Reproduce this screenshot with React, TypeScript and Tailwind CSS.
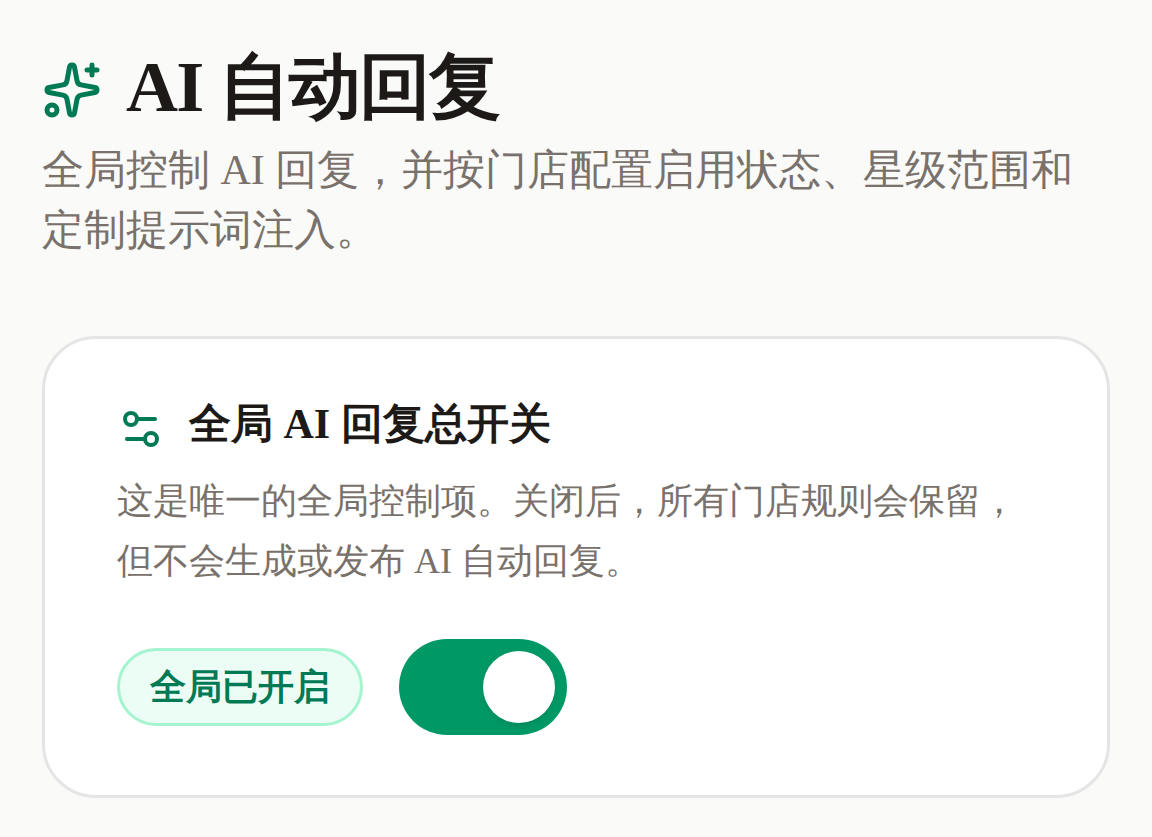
import { useState } from "react";
import { Settings2, Sparkles } from "lucide-react";

export default function App() {
  const [enabled, setEnabled] = useState(true);

  return (
    <div className="min-h-screen bg-[#fafaf9] px-[42px] pt-[42px] pb-10 font-['Liberation_Serif',serif] text-stone-900">
      <header>
        <h1 className="flex items-center gap-6 text-[72px] leading-[90px] font-bold tracking-[-1.8px]">
          <Sparkles className="mt-1.5 size-[60px] shrink-0 text-[#007a55]" aria-hidden="true" />
          AI 自动回复
        </h1>
        <p className="mt-2 text-[42px] leading-[60px] text-stone-500">
          全局控制 AI 回复，并按门店配置启用状态、星级范围和定制提示词注入。
        </p>
      </header>

      <main className="mt-[76px]">
        <section className="rounded-[54px] border-3 border-[#e5e5e5] bg-white px-[72px] pt-[57px] pb-[60px]">
          <h2 className="flex items-start gap-6 text-[42px] leading-[57px] font-bold">
            <Settings2 className="mt-[9px] size-12 shrink-0 text-[#007a55]" aria-hidden="true" />
            <span id="global-label">全局 AI 回复总开关</span>
          </h2>
          <p className="mt-[18px] text-[36px] leading-[60px] text-stone-500">
            这是唯一的全局控制项。关闭后，所有门店规则会保留，但不会生成或发布 AI 自动回复。
          </p>
          <div className="mt-12 flex items-center gap-9">
            <span className="rounded-full border-3 border-[#a4f4cf] bg-[#ecfdf5] px-[30px] py-3 text-[36px] leading-[48px] font-bold text-[#007a55]">
              {enabled ? "全局已开启" : "全局已关闭"}
            </span>
            <button
              type="button"
              role="switch"
              aria-checked={enabled}
              aria-labelledby="global-label"
              onClick={() => setEnabled(!enabled)}
              className={`flex h-24 w-[168px] items-center rounded-full p-3 ${enabled ? "justify-end bg-[#009966]" : "justify-start bg-stone-300"}`}
            >
              <span className="size-[72px] rounded-full bg-white shadow-[0_3px_6px_rgba(0,0,0,0.1)]" />
            </button>
          </div>
        </section>
      </main>
    </div>
  );
}
